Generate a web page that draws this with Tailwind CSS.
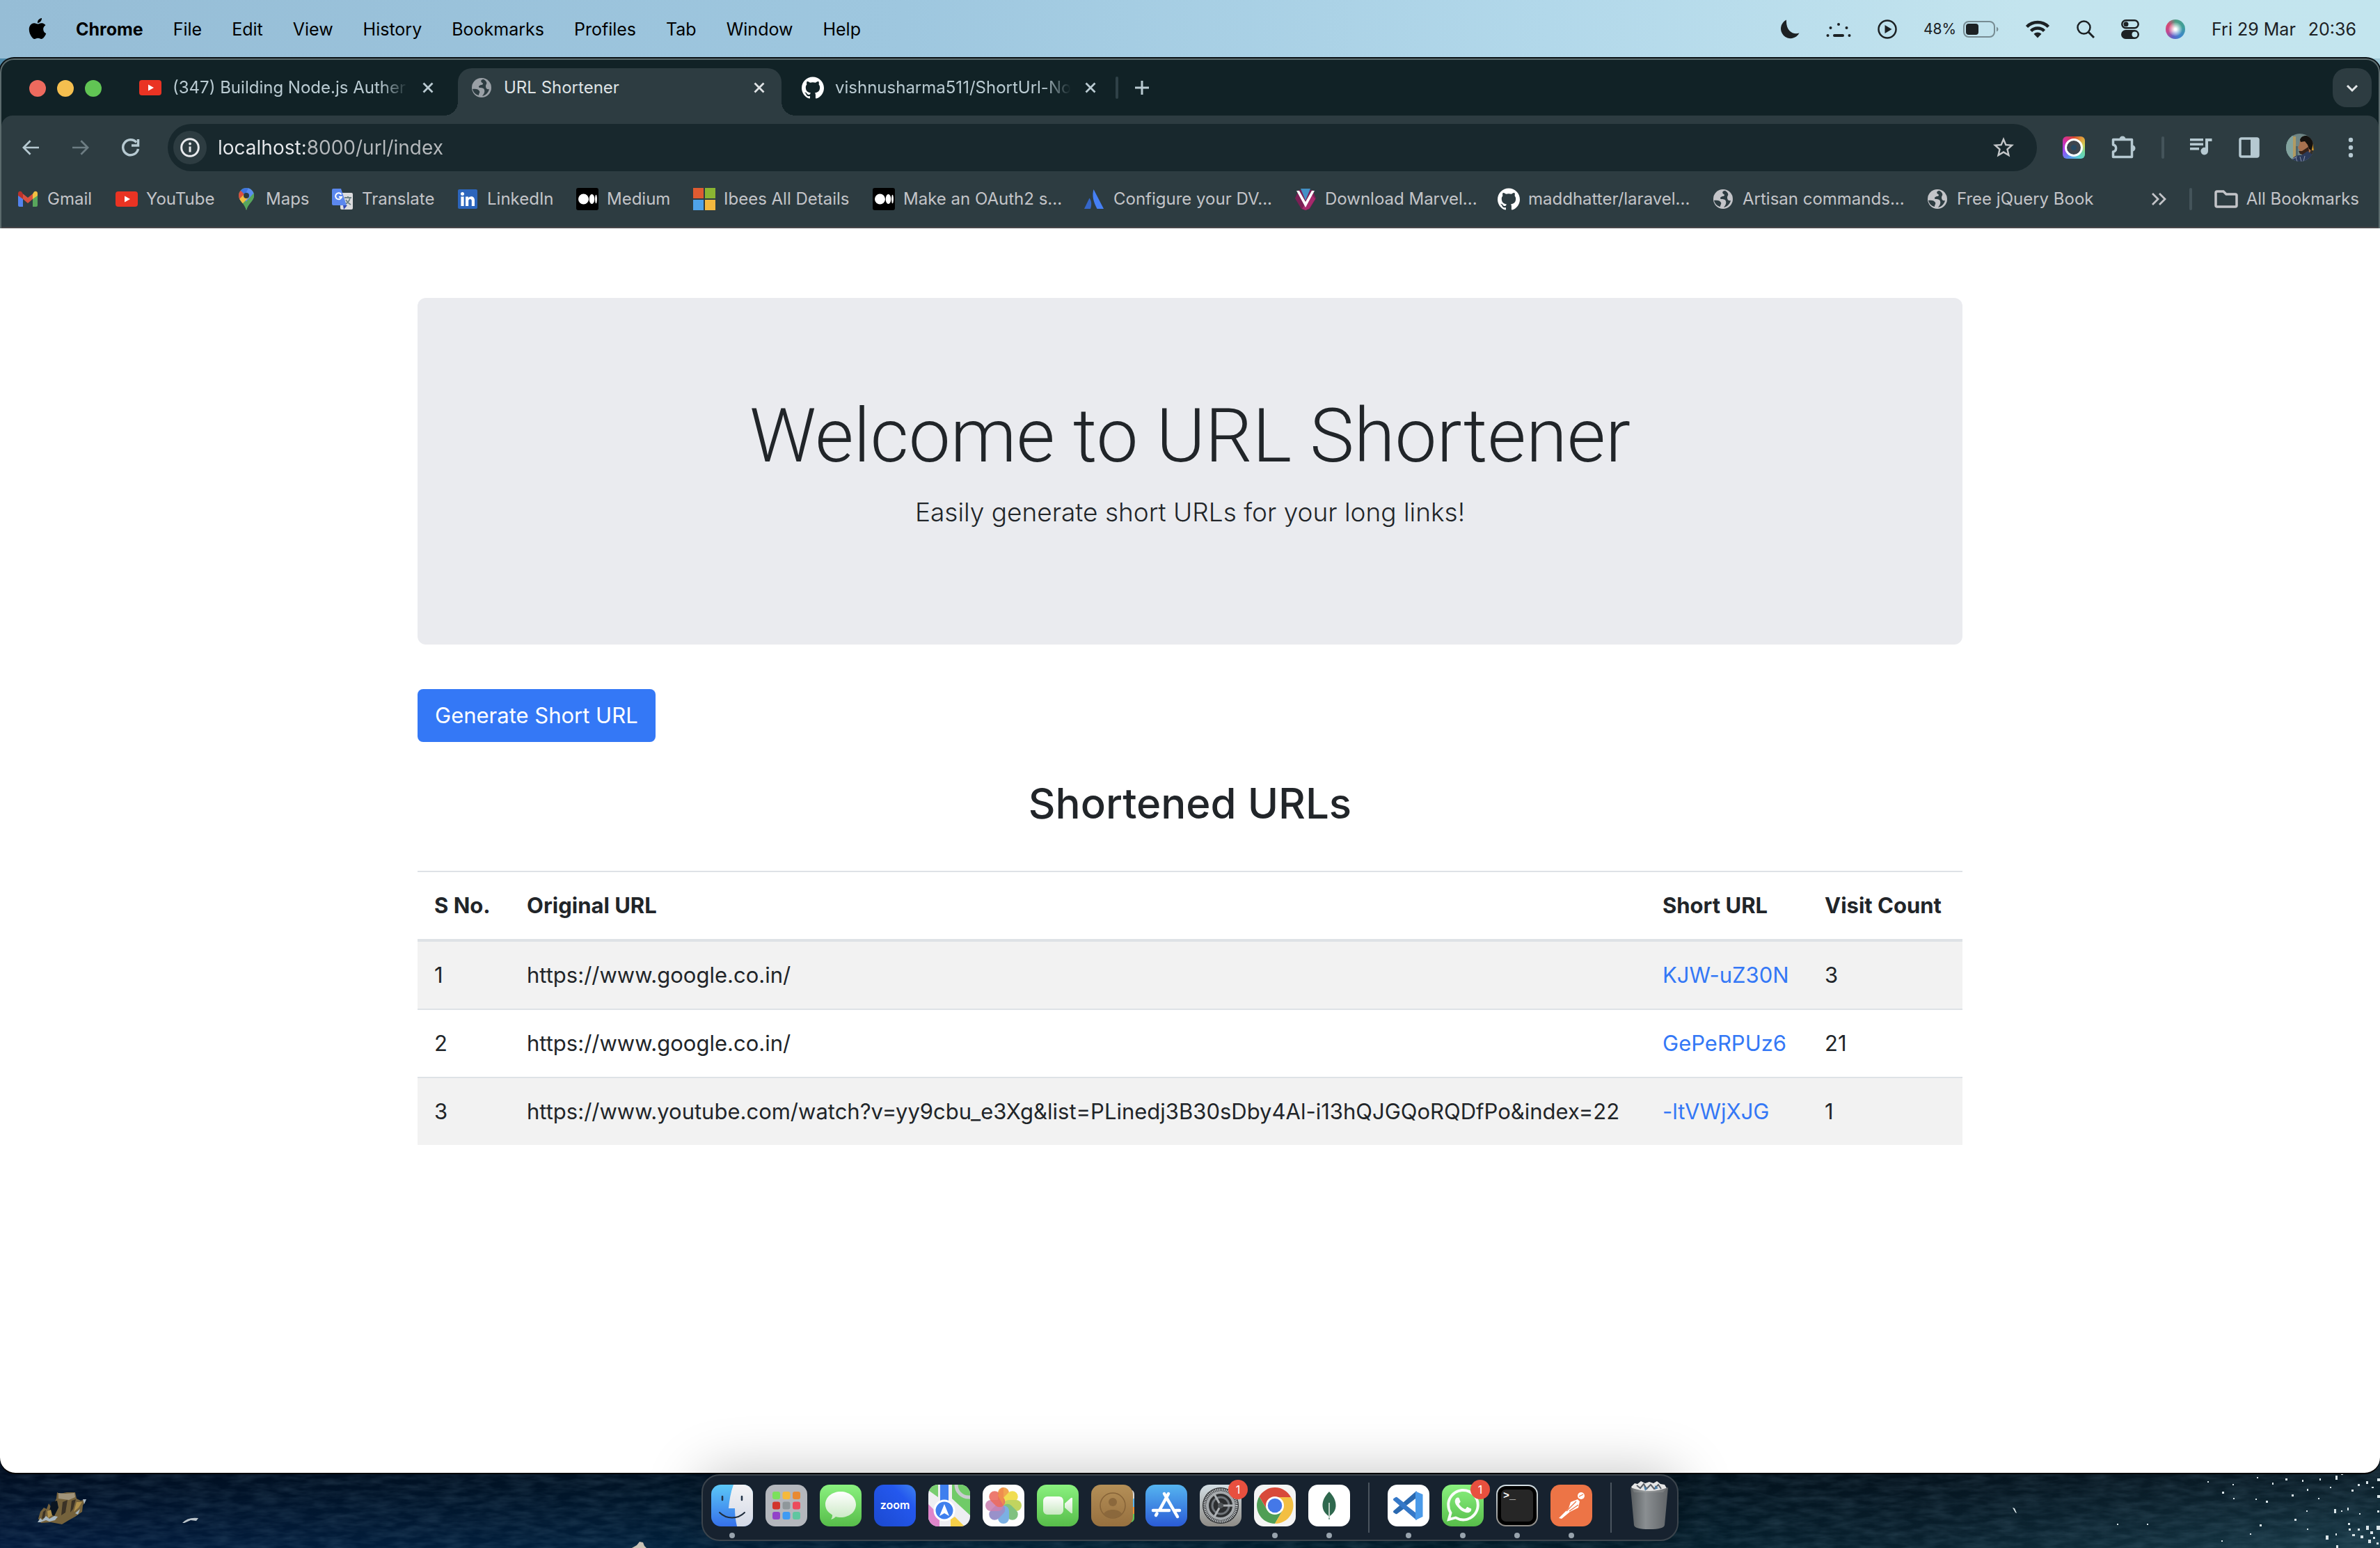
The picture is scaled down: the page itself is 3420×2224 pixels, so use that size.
<!DOCTYPE html>
<html lang="en">
<head>
<meta charset="utf-8">
<title>URL Shortener</title>
<script src="https://cdn.jsdelivr.net/npm/@tailwindcss/browser@4"></script>
</head>
<body class="flex min-h-screen flex-col bg-[#01172b] font-['Inter',sans-serif] text-[#212529]">

<!-- Shared icon symbols -->
<svg class="hidden" aria-hidden="true">
  <symbol id="youtube" viewBox="0 0 32 32"><rect x="0" y="5" width="32" height="22" rx="4" fill="#ea3323"/><path d="M13 11.500v9l8-4.500z" fill="#fff"/></symbol>
  <symbol id="github" viewBox="0 0 24 24"><path fill="#fff" d="M12 .297c-6.63 0-12 5.373-12 12 0 5.303 3.438 9.800 8.205 11.385.6.113.82-.258.82-.577 0-.285-.01-1.040-.015-2.040-3.338.724-4.042-1.610-4.042-1.610C4.422 18.070 3.633 17.700 3.633 17.700c-1.087-.744.084-.729.084-.729 1.205.084 1.838 1.236 1.838 1.236 1.070 1.835 2.809 1.305 3.495.998.108-.776.417-1.305.76-1.605-2.665-.3-5.466-1.332-5.466-5.930 0-1.310.465-2.380 1.235-3.220-.135-.303-.54-1.523.105-3.176 0 0 1.005-.322 3.300 1.230.96-.267 1.980-.399 3-.405 1.020.006 2.040.138 3 .405 2.280-1.552 3.285-1.230 3.285-1.230.645 1.653.24 2.873.12 3.176.765.84 1.230 1.910 1.230 3.220 0 4.610-2.805 5.625-5.475 5.920.42.36.81 1.096.81 2.220 0 1.606-.015 2.896-.015 3.286 0 .315.21.69.825.57C20.565 22.092 24 17.592 24 12.297c0-6.627-5.373-12-12-12"/></symbol>
  <symbol id="globe" viewBox="0 0 32 32"><circle cx="16" cy="16" r="14" fill="currentColor"/><path d="M18 4c-4 1-3 4-1 5 2 1 1 3-2 3-3 1-4 3-2 4 3 0 6 0 7 3 1 4-1 6-3 9 5-1 9-5 10-10-3 1-5-1-5-4 0-3 2-3 1-6-1-2-3-4-5-4zM3 18c4-1 9 0 10 3 1 2-1 3-1 6-5-1-8-5-9-9z" fill="#2d3c41"/></symbol>
  <symbol id="medium" viewBox="0 0 32 32"><rect width="32" height="32" rx="3" fill="#000"/><circle cx="10.500" cy="16" r="7.500" fill="#fff"/><ellipse cx="22.500" cy="16" rx="3.800" ry="7" fill="#fff"/><ellipse cx="28.500" cy="16" rx="1.400" ry="6.300" fill="#fff"/></symbol>
  <symbol id="close" viewBox="0 0 24 24"><path d="M5.500 5.500l13 13M18.500 5.500l-13 13" stroke="currentColor" stroke-width="2.800" fill="none"/></symbol>
</svg>

<!-- Menu bar -->
<header class="flex h-[84px] shrink-0 items-center justify-between bg-[linear-gradient(90deg,#96bdd6_0%,#9ec7df_38%,#b2d8ea_65%,#c3e4ee_85%,#c3e5ee_100%)] pr-[34px] pl-[38px] text-[25px] leading-8 whitespace-nowrap text-black">
  <nav class="flex items-center gap-[43px]" aria-label="Application menu">
    <svg class="-mr-1 size-8 pb-0.5" viewBox="0 0 24 24"><path d="M12.152 6.896c-.948 0-2.415-1.078-3.960-1.040-2.040.027-3.910 1.183-4.961 3.014-2.117 3.675-.546 9.103 1.519 12.090 1.013 1.454 2.208 3.090 3.792 3.039 1.520-.065 2.090-.987 3.935-.987 1.831 0 2.350.987 3.960.948 1.637-.026 2.676-1.480 3.676-2.948 1.156-1.688 1.636-3.325 1.662-3.415-.039-.013-3.182-1.221-3.220-4.857-.026-3.040 2.480-4.494 2.597-4.559-1.429-2.090-3.623-2.324-4.390-2.376-2-.156-3.675 1.090-4.610 1.090zM15.530 3.830c.843-1.012 1.400-2.427 1.245-3.830-1.207.052-2.662.805-3.532 1.818-.78.896-1.454 2.338-1.273 3.714 1.338.104 2.715-.688 3.559-1.701"/></svg>
    <a href="#" class="font-bold">Chrome</a>
    <a href="#">File</a>
    <a href="#">Edit</a>
    <a href="#">View</a>
    <a href="#">History</a>
    <a href="#">Bookmarks</a>
    <a href="#">Profiles</a>
    <a href="#">Tab</a>
    <a href="#">Window</a>
    <a href="#">Help</a>
  </nav>
  <div class="flex items-center gap-[38px] text-[#1c2124]">
    <svg class="size-7" viewBox="0 0 28 28"><path d="M9 .5A14 14 0 1 0 27.500 19.500C19 22.500 8 17 9 .5z" fill="currentColor"/></svg>
    <svg class="h-7 w-9" viewBox="0 0 36 28" fill="currentColor"><circle cx="18" cy="7" r="2"/><circle cx="6.500" cy="12" r="2"/><circle cx="29.500" cy="12" r="2"/><circle cx="2.500" cy="23" r="2"/><circle cx="33.500" cy="23" r="2"/><rect x="10" y="21" width="16" height="4" rx="2"/></svg>
    <svg class="size-7" viewBox="0 0 28 28"><circle cx="14" cy="14" r="12.500" fill="none" stroke="currentColor" stroke-width="2.500"/><path d="M10.500 8v12l10-6z" fill="currentColor"/></svg>
    <span class="flex items-center gap-2.5 text-[21px]">48%
      <svg class="h-6 w-[51px]" viewBox="0 0 51 24"><rect x="1" y="1" width="44" height="22" rx="7" fill="none" stroke="#1c2124" stroke-opacity=".45" stroke-width="2"/><rect x="4" y="4" width="18" height="16" rx="4" fill="#1c2124"/><path d="M48 8.500q2.500 1 2.500 3.500t-2.500 3.500z" fill="#1c2124" fill-opacity=".45"/></svg>
    </span>
    <svg class="h-7 w-9" viewBox="0 0 36 28"><path d="M2.500 10.500a22 22 0 0 1 31 0M8.500 16.500a13.500 13.500 0 0 1 19 0" fill="none" stroke="currentColor" stroke-width="4.500"/><path d="M18 26.500l-5.500-5.800a8 8 0 0 1 11 0z" fill="currentColor"/></svg>
    <svg class="size-[26px]" viewBox="0 0 26 26"><circle cx="10.500" cy="10.500" r="9" fill="none" stroke="currentColor" stroke-width="2.500"/><path d="M17 17l8 8" stroke="currentColor" stroke-width="3"/></svg>
    <svg class="h-7 w-[26px]" viewBox="0 0 26 28"><rect x="1.300" y="1.300" width="23.400" height="11" rx="5.500" fill="none" stroke="currentColor" stroke-width="2.500"/><circle cx="7" cy="6.800" r="3.500" fill="currentColor"/><rect y="15" width="26" height="13" rx="6.500" fill="currentColor"/><circle cx="19.500" cy="21.500" r="4" fill="#c3e5ee"/></svg>
    <span class="flex size-7 items-center justify-center rounded-full bg-[conic-gradient(from_0deg,#4e9c83,#3e9f9a_20%,#3d86cc_40%,#5d62c9_55%,#c3488e_70%,#d64a72_85%,#4e9c83)]"><span class="size-5 rounded-full bg-[radial-gradient(circle,#ffffff_10%,rgba(255,255,255,0)_75%)]"></span></span>
    <time class="flex gap-[18px]"><span>Fri 29 Mar</span><span>20:36</span></time>
  </div>
</header>

<!-- Browser window -->
<div class="flex grow flex-col bg-[linear-gradient(90deg,#4f89a8,#9ec7d4)] bg-[length:100%_60px] bg-no-repeat">
  <div class="rounded-t-[20px] border-x-2 border-t-2 border-[#5b6a6c] bg-[#112226] shadow-[0_0_0_2px_#0a1216]">
    <!-- Tab strip -->
    <div class="flex h-20 items-end pr-2.5 pl-10 text-[24px] leading-8 text-[#bacbd2]">
      <div class="mb-[27px] flex gap-4">
        <button class="size-6 rounded-full bg-[#ed6a5e]" aria-label="Close window"></button>
        <button class="size-6 rounded-full bg-[#f5bf4f]" aria-label="Minimise window"></button>
        <button class="size-6 rounded-full bg-[#61c554]" aria-label="Zoom window"></button>
      </div>
      <div class="ml-9 flex gap-[11px]" role="tablist">
        <div class="flex h-[68px] w-[465px] items-center gap-4 pr-5 pb-3 pl-[18px]" role="tab">
          <svg class="size-8 shrink-0"><use href="#youtube"/></svg>
          <span class="grow mask-r-from-88% whitespace-nowrap">(347) Building Node.js Auther</span>
          <button aria-label="Close tab"><svg class="size-6"><use href="#close"/></svg></button>
        </div>
        <div class="relative flex h-[68px] w-[465px] items-center gap-4 rounded-t-[20px] bg-[#2d3c41] pr-5 pb-3 pl-[18px] text-[#dfe3e5]" role="tab" aria-selected="true">
          <span class="absolute bottom-0 -left-5 size-5 bg-[radial-gradient(circle_at_0_0,transparent_20px,#2d3c41_20px)]"></span>
          <span class="absolute -right-5 bottom-0 size-5 bg-[radial-gradient(circle_at_100%_0,transparent_20px,#2d3c41_20px)]"></span>
          <svg class="size-8 shrink-0 text-[#9aa0a6]"><use href="#globe"/></svg>
          <span class="grow whitespace-nowrap">URL Shortener</span>
          <button aria-label="Close tab"><svg class="size-6"><use href="#close"/></svg></button>
        </div>
        <div class="flex h-[68px] w-[465px] items-center gap-4 pr-5 pb-3 pl-[18px]" role="tab">
          <svg class="size-8 shrink-0"><use href="#github"/></svg>
          <span class="grow mask-r-from-88% whitespace-nowrap">vishnusharma511/ShortUrl-No</span>
          <button aria-label="Close tab"><svg class="size-6"><use href="#close"/></svg></button>
        </div>
      </div>
      <div class="mb-3 ml-1 flex h-14 grow items-center gap-5">
        <span class="h-8 w-1 rounded-full bg-[#2f4147]"></span>
        <button aria-label="New tab"><svg class="size-7" viewBox="0 0 28 28"><path d="M14 4v20M4 14h20" stroke="currentColor" stroke-width="3"/></svg></button>
        <button class="ml-auto flex size-14 items-center justify-center rounded-[20px] bg-[#2d3c41] text-[#e3e7e9]" aria-label="Search tabs"><svg class="size-6" viewBox="0 0 24 24"><path d="M5 9l7 7 7-7" fill="none" stroke="currentColor" stroke-width="3"/></svg></button>
      </div>
    </div>

    <!-- Toolbar -->
    <div class="rounded-t-2xl border-b-2 border-[#474649] bg-[#2d3c41]">
      <div class="flex items-center gap-[37px] pt-3 pr-6 pl-[26px] text-[#b6c9d1]">
        <div class="flex gap-10">
          <button aria-label="Back"><svg class="size-8" viewBox="0 0 24 24"><path fill="currentColor" d="M21 11H6.830l5.590-5.590L11 4l-8 8 8 8 1.410-1.410L6.830 13H21v-2z"/></svg></button>
          <button aria-label="Forward" class="text-[#6d7d83]"><svg class="size-8" viewBox="0 0 24 24"><path fill="currentColor" d="M3 11h14.170l-5.590-5.590L13 4l8 8-8 8-1.410-1.410L17.170 13H3v-2z"/></svg></button>
          <button aria-label="Reload"><svg class="size-8" viewBox="0 0 32 32" fill="none" stroke="currentColor" stroke-width="3.500"><path d="M26.500 18a11 11 0 1 1-2.500-9.500"/><path d="M26.500 4v9h-9.500"/></svg></button>
        </div>
        <div class="flex h-[68px] grow items-center gap-4 rounded-full bg-[#18282d] pr-[30px] pl-2">
          <span class="flex size-12 items-center justify-center rounded-full bg-[#2d3c41] text-[#e8eaed]"><svg class="size-7" viewBox="0 0 28 28"><circle cx="14" cy="14" r="12.300" fill="none" stroke="currentColor" stroke-width="3"/><path d="M14 12.500v8" stroke="currentColor" stroke-width="3"/><circle cx="14" cy="8.500" r="1.900" fill="currentColor"/></svg></span>
          <input class="grow bg-[linear-gradient(90deg,#e8eaed_125px,#b6babd_125px)] bg-clip-text text-[28px] leading-9 text-transparent outline-none" type="text" aria-label="Address" value="localhost:8000/url/index">
          <button aria-label="Bookmark this page" class="text-[#c4c7c9]"><svg class="size-9" viewBox="0 0 24 24"><path fill="currentColor" d="M22 9.240l-7.190-.62L12 2 9.190 8.630 2 9.240l5.460 4.730L5.820 21 12 17.270 18.180 21l-1.630-7.030L22 9.240zM12 15.400l-3.760 2.270 1-4.280-3.320-2.880 4.380-.38L12 6.100l1.710 4.040 4.380.38-3.320 2.880 1 4.280L12 15.400z"/></svg></button>
        </div>
        <button aria-label="Screenshot extension" class="flex size-8 items-center justify-center rounded-md bg-[conic-gradient(from_0deg,#d9482d,#e2a03c_12%,#c9d45c_22%,#72d6a0_32%,#5cd0cf_42%,#5b8df0_58%,#a83ef0_72%,#d42fa0_86%,#d9482d)]"><span class="flex size-[26px] items-center justify-center rounded-full border-[3px] border-white bg-[#3f454e]"><span class="size-2 rounded-full bg-[#274863]"></span></span></button>
        <button aria-label="Extensions"><svg class="size-9" viewBox="-1 -1 36 36"><path d="M2.500 5.500h27v25h-27v-7.500c5.500-1 5.500-9 0-10z" fill="none" stroke="currentColor" stroke-width="3.500" stroke-linejoin="round"/><path d="M11.500 5a4.500 4.500 0 0 1 9 0zM30 13.500a4.500 4.500 0 0 1 0 9z" fill="currentColor"/></svg></button>
        <span class="h-8 w-1 rounded-full bg-[#44545a]"></span>
        <button aria-label="Media controls"><svg class="size-8" viewBox="0 0 32 32"><path fill="currentColor" d="M0 3h19v3.500H0zM0 9.500h19V13H0zM0 16h13v3.500H0zM22 3h9.500v4H26v14a5.300 5.300 0 1 1-4-5z"/></svg></button>
        <button aria-label="Side panel"><svg class="size-8" viewBox="0 0 32 32"><rect x="3" y="3" width="26" height="26" rx="2" fill="none" stroke="currentColor" stroke-width="3.500"/><path d="M18 3h11v26H18z" fill="currentColor"/></svg></button>
        <button aria-label="Profile"><svg class="size-10" viewBox="0 0 40 40"><clipPath id="av"><circle cx="20" cy="20" r="20"/></clipPath><g clip-path="url(#av)"><rect width="40" height="40" fill="#6f8585"/><path d="M0 0h10v40H0z" fill="#82a39e"/><path d="M10 4h4v30h-4z" fill="#b09a62"/><path d="M14 18h3v16h-3z" fill="#4f666e"/><path d="M34 0h6v40h-6z" fill="#33302a"/><path d="M38 14l2 10h-3z" fill="#d49a28"/><path d="M20 9l6-4 10 4v14l-4 9-8-1-4-3-1-5-2-3 2-4z" fill="#a8714f"/><path d="M20 9c2-8 14-8 18 0 1 6 0 11-2 15l-3-2-2-6-4-5-6 1z" fill="#15120f"/><path d="M18 25l5 0 9-6 1 6-6 6-7-2z" fill="#37231a"/><path d="M8 40c2-8 8-9 14-9l9-6 8 6v9z" fill="#2b3a5a"/><path d="M14 34l2 6M20 33l2 7M27 32l-2 8M10 36l6-3" stroke="#8a93a8"/></g></svg></button>
        <button aria-label="More"><svg class="size-8" viewBox="0 0 32 32" fill="currentColor"><circle cx="16" cy="5" r="3.200"/><circle cx="16" cy="16" r="3.200"/><circle cx="16" cy="27" r="3.200"/></svg></button>
      </div>

      <!-- Bookmarks bar -->
      <div class="flex h-20 items-center pr-7 pl-[22px] text-[24px] leading-8 whitespace-nowrap text-[#c3c4c8]">
        <a href="#" class="flex w-[142px] items-center gap-3"><svg class="size-8" viewBox="0 0 32 32"><path d="M2 8v17q0 2 2 2h5V13z" fill="#5383ec"/><path d="M30 8v17q0 2-2 2h-5V13z" fill="#58a65c"/><path d="M23 8.500V16l7-5V8c0-3-3-4-5-2.500z" fill="#f1bf42"/><path d="M2 8v3l7 5V8.500L7 5.500C5 4 2 5 2 8z" fill="#b9322b"/><path d="M9 8.500l7 5.500 7-5.500V16l-7 6-7-6z" fill="#d95040"/></svg>Gmail</a>
        <a href="#" class="flex w-[172px] items-center gap-3"><svg class="size-8"><use href="#youtube"/></svg>YouTube</a>
        <a href="#" class="flex w-[138px] items-center gap-3"><svg class="size-8" viewBox="0 0 32 32"><clipPath id="pin"><path d="M16 0a11 11 0 0 1 11 11c0 8-8 10-11 21-3-11-11-13-11-21A11 11 0 0 1 16 0z"/></clipPath><g clip-path="url(#pin)"><rect width="32" height="32" fill="#58a65c"/><path d="M0 0h26l-10 12-6-5z" fill="#3f74e0"/><path d="M19 0l10 6-13 14-4-5z" fill="#5b8def"/><path d="M0 3l8 1 6 6-8 9z" fill="#d95040"/><path d="M4 18l9-9 6 5L7 26z" fill="#f1bf42"/><path d="M27 7L10 26l6 7 12-18z" fill="#58a65c"/></g><circle cx="16" cy="11" r="4" fill="#2d3c41"/></svg>Maps</a>
        <a href="#" class="flex w-[180px] items-center gap-3"><svg class="size-8" viewBox="0 0 32 32"><rect x="13" y="7" width="18" height="24" rx="2" fill="#dcdcde"/><path d="M19 14h10M24 12v2M27 14c-1 5-4 8-7 9M21 17c2 4 4 5 7 7" stroke="#6f8386" stroke-width="1.800" fill="none"/><path d="M17 25h6l-5 6z" fill="#3248b4"/><path d="M3 1h11l8 24H3q-2 0-2-2V3q0-2 2-2z" fill="#5b87ee"/><path d="M14.500 9.500a4.500 4.500 0 1 0 .5 3.500h-4" stroke="#fff" stroke-width="2" fill="none"/></svg>Translate</a>
        <a href="#" class="flex w-[172px] items-center gap-3"><svg class="size-8" viewBox="0 0 32 32"><rect x="2" y="2" width="28" height="28" rx="2" fill="#2c65bc"/><g fill="#fff"><circle cx="8.500" cy="8.500" r="2.500"/><path d="M6.400 12.500h4.200V26H6.400zM13 12.500h4v2c2-3.500 9-3.500 9 3V26h-4.200v-7.500c0-3.500-4.600-3.300-4.600 0V26H13z"/></g></svg>LinkedIn</a>
        <a href="#" class="flex w-[168px] items-center gap-3"><svg class="size-8"><use href="#medium"/></svg>Medium</a>
        <a href="#" class="flex w-[258px] items-center gap-3"><svg class="size-8" viewBox="0 0 32 32"><path d="M0 0h15v15H0z" fill="#df5b31"/><path d="M17 0h15v15H17z" fill="#8bb532"/><path d="M0 17h15v15H0z" fill="#4ea2e9"/><path d="M17 17h15v15H17z" fill="#f3b83f"/></svg>Ibees All Details</a>
        <a href="#" class="flex w-[302px] items-center gap-3"><svg class="size-8"><use href="#medium"/></svg>Make an OAuth2 s...</a>
        <a href="#" class="flex w-[304px] items-center gap-3"><svg class="size-8" viewBox="0 0 32 32"><path d="M9.500 14.500c3 4 3.500 9 1.500 15.500H2z" fill="#3566c8"/><path d="M15.500 2L30 30h-9.500C15 20 13 11 15.500 2z" fill="#4680f5"/></svg>Configure your DV...</a>
        <a href="#" class="flex w-[292px] items-center gap-3"><svg class="size-8" viewBox="0 0 32 32"><path d="M6 3h20l5 12-9 15-6 2-6-2L1 15z" fill="#7b1f55"/><path d="M16 22l8-14 6 8-9 14-5 2-5-2z" fill="#a62a6c"/><path d="M9 1h14l-7 17z" fill="#4391c6"/><path d="M3 4h4l9 16 9-16h4L16 28z" fill="#fff"/></svg>Download Marvel...</a>
        <a href="#" class="flex w-[308px] items-center gap-3"><svg class="size-8"><use href="#github"/></svg>maddhatter/laravel...</a>
        <a href="#" class="flex w-[308px] items-center gap-3"><svg class="size-8"><use href="#globe"/></svg>Artisan commands...</a>
        <a href="#" class="flex items-center gap-3"><svg class="size-8"><use href="#globe"/></svg>Free jQuery Book</a>
        <div class="ml-auto flex items-center gap-8">
          <button aria-label="More bookmarks"><svg class="size-6" viewBox="0 0 24 24" fill="none" stroke="currentColor" stroke-width="2.800"><path d="M3 4l8 8-8 8M13 4l8 8-8 8"/></svg></button>
          <span class="h-8 w-1 rounded-full bg-[#44545a]"></span>
          <a href="#" class="flex items-center gap-3"><svg class="h-7 w-[34px]" viewBox="0 0 34 28"><path d="M4 3h9l4 4h13q2 0 2 2v14q0 2-2 2H4q-2 0-2-2V5q0-2 2-2z" fill="none" stroke="currentColor" stroke-width="3.500"/></svg>All Bookmarks</a>
        </div>
      </div>
    </div>
  </div>

  <!-- Page -->
  <main class="grow rounded-b-[22px] bg-white px-8 pt-[100px] pb-24 shadow-[0_2px_0_#000]">
    <div class="mx-auto max-w-[2220px] text-[31px] leading-[48px]">
      <section class="rounded-xl bg-[#eaebef] px-16 py-32 text-center">
        <h1 class="mb-2 font-['Roboto',sans-serif] text-[107px] leading-[142px] font-light">Welcome to URL Shortener</h1>
        <p class="mb-8 text-[37px] leading-[60px] font-light">Easily generate short URLs for your long links!</p>
      </section>
      <button class="mt-16 block h-[76px] rounded-lg bg-[#3478f6] px-[25px] text-white">Generate Short URL</button>
      <h2 class="mt-[50px] mb-[58px] text-center text-[60px] leading-[77px] font-medium">Shortened URLs</h2>
      <table class="w-full border-collapse text-left">
        <thead>
          <tr class="border-t-2 border-b-4 border-[#dee2e6]">
            <th scope="col" class="w-[133px] p-6 font-bold whitespace-nowrap">S No.</th>
            <th scope="col" class="p-6 font-bold">Original URL</th>
            <th scope="col" class="w-[233px] p-6 font-bold whitespace-nowrap">Short URL</th>
            <th scope="col" class="w-[222px] p-6 font-bold whitespace-nowrap">Visit Count</th>
          </tr>
        </thead>
        <tbody>
          <tr class="bg-[#f2f2f2]">
            <td class="p-6">1</td><td class="p-6">https://www.google.co.in/</td><td class="p-6"><a href="#" class="text-[#3478f6]">KJW-uZ30N</a></td><td class="p-6">3</td>
          </tr>
          <tr class="border-t-2 border-[#dee2e6]">
            <td class="p-6">2</td><td class="p-6">https://www.google.co.in/</td><td class="p-6"><a href="#" class="text-[#3478f6]">GePeRPUz6</a></td><td class="p-6">21</td>
          </tr>
          <tr class="border-t-2 border-[#dee2e6] bg-[#f2f2f2]">
            <td class="p-6">3</td><td class="p-6">https://www.youtube.com/watch?v=yy9cbu_e3Xg&amp;list=PLinedj3B30sDby4Al-i13hQJGQoRQDfPo&amp;index=22</td><td class="p-6"><a href="#" class="text-[#3478f6]">-ltVWjXJG</a></td><td class="p-6">1</td>
          </tr>
        </tbody>
      </table>
    </div>
  </main>
</div>

<!-- Wallpaper strip and dock -->
<footer class="relative flex h-[108px] shrink-0 justify-center pt-0.5">
  <div class="absolute inset-x-0 -top-6 bottom-0 -z-10 overflow-hidden bg-[linear-gradient(180deg,rgba(0,6,14,.7),rgba(0,6,14,0)),linear-gradient(90deg,#021a3c_0%,#02203c_25%,#03263c_45%,#02202f_60%,#0a2230_80%,#183a48_100%)]">
    <svg class="absolute inset-0 h-full w-full opacity-15"><filter id="sea"><feTurbulence type="fractalNoise" baseFrequency=".03 .12" numOctaves="3" seed="4"/><feColorMatrix values="0 0 0 0 .3  0 0 0 0 .5  0 0 0 0 .65  1.600 0 0 0 -.5"/></filter><rect width="100%" height="100%" filter="url(#sea)"/></svg>
    <svg class="absolute bottom-0 left-0 h-[108px] w-[1020px]" viewBox="0 0 1020 108">
      <path d="M82 28l4 2 10-2 12 0 2 9 6 3 8-2-5 9-1 9-10 7-9 5-10 6-16-3-14 1-4-6 3-10 5-6 4 2 3-8 4 6 3-4 4-9z" fill="#75623c"/>
      <path d="M84 29l10 1 13-1 1 6-9 4-15-2z" fill="#a0937a"/><path d="M74 42l8-2 2 10-6 12-8-3z" fill="#0a1420"/><path d="M90 42l7-3-3 18-6 4zM103 40l6-2-4 14-4 5zM62 56l4-3-2 12-4 1z" fill="#3b3226"/><path d="M110 42l8 0-5 8-7 6zM68 55l5-2 2 8-6 4z" fill="#b0914c"/>
      <path d="M54 71l4-6 3 3 5-6 5 4 7-4 5 1-4 5-8 2-5-2-8 3zM119 38l5 0-3 7zM108 58l7-6-3 8z" fill="#a8b7c2"/>
      <path d="M262 72q8-9 23-7l-3 4-8-1-9 4z" fill="#b9c3ca"/>
      <path d="M908 108l7-4 4-5 5 1 2 5 3 3z" fill="#c9c1b4"/>
    </svg>
    <svg class="absolute right-0 bottom-0 h-[108px] w-[560px]" viewBox="0 0 560 108" fill="#dbe6ea"><path d="M32 50l3 1 3 7-2-1zM182 73h2v2h-2zM312 12h2v2h-2zM333 27h3v3h-3zM348 16h2v2h-2zM383 6h2v2h-2zM405 14h2v3h-2zM424 8h3v3h-3zM433 31h3v3h-3zM448 10h2v3h-2zM455 23h2v3h-2zM473 8h2v3h-2zM488 20h2v2h-2zM496 4h3v6h-3zM504 0h3v3h-3zM519 24h3v3h-3zM528 16h3v3h-3zM540 12h3v4h-3zM548 20h3v2h-3zM556 8h4v4h-4zM556 32h4v4h-4zM396 40h3v3h-3zM381 37h2v2h-2zM349 36h2v2h-2zM471 36h2v2h-2zM454 54h2v2h-2zM494 52h3v6h-3zM504 54h2v2h-2zM513 50h2v4h-2zM530 58h2v2h-2zM556 54h3v3h-3zM437 66h3v3h-3zM387 74h3v3h-3zM225 73h2v2h-2zM455 80h2v2h-2zM514 72h3v3h-3zM515 80h3v3h-3zM528 80h3v3h-3zM540 76h4v6h-4zM546 84h4v4h-4zM555 76h5v6h-5zM373 87h2v2h-2zM482 90h4v6h-4zM496 87h2v3h-2zM520 88h4v3h-4zM532 90h4v4h-4zM543 96h4v5h-4zM550 92h3v3h-3zM332 97h2v2h-2zM497 104h3v4h-3zM555 100h3v3h-3z"/></svg>
  </div>

  <nav class="relative flex h-24 items-start gap-[18px] rounded-[26px] border-2 border-[#3b444c] bg-[#17222f] px-3 pt-[13px] shadow-[0_0_80px_rgba(0,0,0,.25)]" aria-label="Dock">
    <svg class="absolute h-0 w-0" aria-hidden="true"><defs>
      <linearGradient id="gFind" x2="0" y2="1"><stop stop-color="#5cc8f7"/><stop offset="1" stop-color="#3570ea"/></linearGradient>
      <linearGradient id="gFace" x2="0" y2="1"><stop stop-color="#f3f3f5"/><stop offset="1" stop-color="#d3d9e6"/></linearGradient>
      <linearGradient id="gGreen" x2="0" y2="1"><stop stop-color="#8af17f"/><stop offset="1" stop-color="#57bd4a"/></linearGradient>
      <linearGradient id="gWhite" x2="0" y2="1"><stop stop-color="#fff"/><stop offset="1" stop-color="#c9e8c2"/></linearGradient>
      <linearGradient id="gZoom" x1="1" x2="0" y2="1"><stop stop-color="#3f83f0"/><stop offset=".3" stop-color="#2458ee"/><stop offset="1" stop-color="#1b49cf"/></linearGradient>
      <linearGradient id="gStore" x2="0" y2="1"><stop stop-color="#55b5f0"/><stop offset="1" stop-color="#2a5bd6"/></linearGradient>
      <linearGradient id="gGear" x2="0" y2="1"><stop stop-color="#d3dee4"/><stop offset="1" stop-color="#8e8b86"/></linearGradient>
      <linearGradient id="gTrash"><stop stop-color="#5d6163"/><stop offset=".4" stop-color="#94989a"/><stop offset="1" stop-color="#66696c"/></linearGradient>
      <linearGradient id="gTan" x2="0" y2="1"><stop stop-color="#b48f57"/><stop offset="1" stop-color="#97703f"/></linearGradient>
      <clipPath id="sq"><rect width="60" height="60" rx="14"/></clipPath>
    </defs></svg>

    <a href="#" aria-label="Finder" class="flex flex-col items-center gap-[9px]"><svg class="size-[60px]" viewBox="0 0 60 60"><g clip-path="url(#sq)"><rect width="60" height="60" fill="url(#gFind)"/><path d="M32 0c-4 11-6 22-7 34h9c0 9 1 18 3 26h23V0z" fill="url(#gFace)"/></g><path d="M16 17v5M44 17v5" stroke="#24364a" stroke-width="2.600" stroke-linecap="round"/><path d="M12 40c10 10 26 10 36 0" fill="none" stroke="#1f2d3c" stroke-width="2" stroke-linecap="round"/></svg><span class="size-2 rounded-full bg-[#98a3ad]"></span></a>
    <a href="#" aria-label="Launchpad"><svg class="size-[60px]" viewBox="0 0 60 60"><rect width="60" height="60" rx="14" fill="#b4b7bd"/><g><rect x="10" y="10" width="11" height="11" rx="3" fill="#7be05c"/><rect x="24.500" y="10" width="11" height="11" rx="3" fill="#f6b93c"/><rect x="39" y="10" width="11" height="11" rx="3" fill="#e88a32"/><rect x="10" y="24.500" width="11" height="11" rx="3" fill="#d2352b"/><rect x="24.500" y="24.500" width="11" height="11" rx="3" fill="#8f979b"/><rect x="39" y="24.500" width="11" height="11" rx="3" fill="#ec4b5c"/><rect x="10" y="39" width="11" height="11" rx="3" fill="#9243c9"/><rect x="24.500" y="39" width="11" height="11" rx="3" fill="#3f9bf3"/><rect x="39" y="39" width="11" height="11" rx="3" fill="#5fc6a0"/></g></svg></a>
    <a href="#" aria-label="Messages"><svg class="size-[60px]" viewBox="0 0 60 60"><rect width="60" height="60" rx="14" fill="url(#gGreen)"/><path d="M30 10c12.500 0 22 8 22 18.500S42.500 47 30 47c-2.500 0-5-.3-7-1-2 2-4 3.200-7 4 1.500-2 2.200-4 2-6.500C12 40 8 35 8 28.500 8 18 17.500 10 30 10z" fill="url(#gWhite)"/></svg></a>
    <a href="#" aria-label="Zoom"><svg class="size-[60px]" viewBox="0 0 60 60"><rect width="60" height="60" rx="14" fill="url(#gZoom)"/><text x="30" y="35" text-anchor="middle" font-family="Inter, sans-serif" font-weight="600" font-size="16" fill="#fff">zoom</text></svg></a>
    <a href="#" aria-label="Maps"><svg class="size-[60px]" viewBox="0 0 60 60"><g clip-path="url(#sq)"><rect width="60" height="60" fill="#eeeef2"/><path d="M0 0h14v18L0 8z" fill="#79ce70"/><path d="M34 0h26v44L34 20z" fill="#70cb68"/><circle cx="58" cy="0" r="18" fill="none" stroke="#c9ccd0" stroke-width="5"/><path d="M0 28l16 16v16H0z" fill="#df85cb"/><path d="M32 50l6-4 14 14H32z" fill="#f6cf48"/><path d="M17 0h12v40H17z" fill="#3f7fee"/></g><circle cx="23" cy="37" r="14" fill="#3f7fee" stroke="#fff" stroke-width="3"/><path d="M23 28l7 17-7-4-7 4z" fill="#fff"/></svg></a>
    <a href="#" aria-label="Photos"><svg class="size-[60px]" viewBox="0 0 60 60"><rect width="60" height="60" rx="14" fill="#fdfdfd"/><g opacity=".88"><rect x="22" y="4" width="16" height="26" rx="8" fill="#f09a37"/><rect x="22" y="4" width="16" height="26" rx="8" fill="#efd93b" transform="rotate(45 30 30)"/><rect x="22" y="4" width="16" height="26" rx="8" fill="#b9cf4a" transform="rotate(90 30 30)"/><rect x="22" y="4" width="16" height="26" rx="8" fill="#6fb96e" transform="rotate(135 30 30)"/><rect x="22" y="4" width="16" height="26" rx="8" fill="#6aa6e0" transform="rotate(180 30 30)"/><rect x="22" y="4" width="16" height="26" rx="8" fill="#8c83c4" transform="rotate(225 30 30)"/><rect x="22" y="4" width="16" height="26" rx="8" fill="#c272a8" fill-opacity=".9" transform="rotate(270 30 30)"/><rect x="22" y="4" width="16" height="26" rx="8" fill="#e8594a" fill-opacity=".9" transform="rotate(315 30 30)"/><path d="M30 30l-8-14q2-12 8-12v26z" fill="#ee7f37"/></g></svg></a>
    <a href="#" aria-label="FaceTime"><svg class="size-[60px]" viewBox="0 0 60 60"><rect width="60" height="60" rx="14" fill="url(#gGreen)"/><rect x="9" y="17" width="29" height="26" rx="6" fill="url(#gWhite)"/><path d="M40 27l9-8q2-1 2 1v20q0 2-2 1l-9-8z" fill="url(#gWhite)"/></svg></a>
    <a href="#" aria-label="Contacts"><svg class="size-[60px] overflow-visible" viewBox="0 0 60 60"><path d="M56 8h3q3 2 3 6v6h-6z" fill="#d8d8d8"/><path d="M56 20h6v12h-6z" fill="#5ab6ee"/><path d="M56 32h6v10h-6z" fill="#ee8f33"/><path d="M56 42h6v6q0 4-4 6h-2z" fill="#62c554"/><rect width="60" height="60" rx="14" fill="url(#gTan)"/><circle cx="31" cy="30" r="18" fill="none" stroke="#866338" stroke-width="1.500"/><circle cx="31" cy="25" r="6" fill="#8b683c"/><path d="M18 42c4-8 22-8 26 0-6 8-20 8-26 0z" fill="#8b683c"/></svg></a>
    <a href="#" aria-label="App Store"><svg class="size-[60px]" viewBox="0 0 60 60"><rect width="60" height="60" rx="14" fill="url(#gStore)"/><path d="M33 13L20 37M15 44l1.500-2.500M27 13l19 33M11 37h23M43 37h6" stroke="#fff" stroke-width="4.500" stroke-linecap="round"/></svg></a>
    <a href="#" aria-label="System Settings" class="relative"><svg class="size-[60px]" viewBox="0 0 60 60"><rect width="60" height="60" rx="14" fill="url(#gGear)"/><circle cx="30" cy="30" r="26" fill="#2c2e30"/><circle cx="30" cy="30" r="23" fill="none" stroke="#b9bdc0" stroke-width="3.500" stroke-dasharray="1.500 1"/><circle cx="30" cy="30" r="19" fill="none" stroke="#a5a9ac" stroke-width="4"/><circle cx="30" cy="30" r="12" fill="none" stroke="#70757a" stroke-width="3"/><path d="M30 30h19M30 30l-9.500-17M30 30l-9.500 17" stroke="#aeb2b5" stroke-width="3"/><circle cx="30" cy="30" r="4" fill="#515558"/></svg><span class="absolute -top-[7px] -right-[9px] flex size-7 items-center justify-center rounded-full bg-[#e8503f] text-[16px] leading-5 text-white">1</span></a>
    <a href="#" aria-label="Chrome" class="flex flex-col items-center gap-[9px]"><svg class="size-[60px]" viewBox="0 0 60 60"><rect width="60" height="60" rx="14" fill="#f4f4f4"/><path d="M30 56A26 26 0 0 1 7.500 17L19.500 37l21 1z" fill="#4f9e55"/><path d="M30 56l11.500-20L30 18h23.500A26 26 0 0 1 30 56z" fill="#f3bf42"/><path d="M7.500 17A26 26 0 0 1 53 18H30L19 36z" fill="#d8493a"/><circle cx="30" cy="30" r="13" fill="#fff"/><circle cx="30" cy="30" r="10.300" fill="#4478e8"/></svg><span class="size-2 rounded-full bg-[#98a3ad]"></span></a>
    <a href="#" aria-label="MongoDB Compass" class="flex flex-col items-center gap-[9px]"><svg class="size-[60px]" viewBox="0 0 60 60"><rect width="60" height="60" rx="14" fill="#fff"/><path d="M30 10c6 6 10 13 9.500 21C39 38 35 42 31 45l-.5 5h-1L29 45c-4-3-8-7-8.500-14C20 23 24 16 30 10z" fill="#2f684e"/><path d="M30 26v22" stroke="#e8efe9" stroke-width="1.500"/></svg><span class="size-2 rounded-full bg-[#98a3ad]"></span></a>
    <span class="mx-2 -mt-[3px] h-[72px] w-0.5 bg-[#4a545e]"></span>
    <a href="#" aria-label="Visual Studio Code" class="flex flex-col items-center gap-[9px]"><svg class="size-[60px]" viewBox="0 0 60 60"><rect width="60" height="60" rx="14" fill="#fff"/><path d="M8.500 37.500q-1 1.500 0 2.500l3 2q1 .5 2 0L41.500 21V9z" fill="#2a69b0"/><path d="M8.500 22.500q-1-1.500 0-2.500l3-2q1-.5 2 0L41.500 40v11z" fill="#3578c8"/><path d="M40 9.500L50.500 14v32L40 51z" fill="#4a9ae9"/><path d="M40 20v20L27 30z" fill="#fff"/></svg><span class="size-2 rounded-full bg-[#98a3ad]"></span></a>
    <a href="#" aria-label="WhatsApp" class="relative flex flex-col items-center gap-[9px]"><svg class="size-[60px]" viewBox="0 0 60 60"><rect width="60" height="60" rx="14" fill="url(#gGreen)"/><g transform="translate(7 6) scale(1.950)"><path fill="#fafcf9" d="M17.472 14.382c-.297-.149-1.758-.867-2.030-.967-.273-.099-.471-.148-.67.15-.197.297-.767.966-.94 1.164-.173.199-.347.223-.644.075-.297-.15-1.255-.463-2.390-1.475-.883-.788-1.480-1.761-1.653-2.059-.173-.297-.018-.458.13-.606.134-.133.298-.347.446-.52.149-.174.198-.298.298-.497.099-.198.05-.371-.025-.52-.075-.149-.669-1.612-.916-2.207-.242-.579-.487-.5-.669-.51-.173-.008-.371-.01-.57-.01-.198 0-.52.074-.792.372-.272.297-1.040 1.016-1.040 2.479 0 1.462 1.065 2.875 1.213 3.074.149.198 2.096 3.200 5.077 4.487.709.306 1.262.489 1.694.625.712.227 1.360.195 1.871.118.571-.085 1.758-.719 2.006-1.413.248-.694.248-1.289.173-1.413-.074-.124-.272-.198-.57-.347m-5.421 7.403h-.004a9.870 9.870 0 01-5.031-1.378l-.361-.214-3.741.982.998-3.648-.235-.374a9.860 9.860 0 01-1.510-5.260c.001-5.450 4.436-9.884 9.888-9.884 2.640 0 5.122 1.030 6.988 2.898a9.825 9.825 0 012.893 6.994c-.003 5.450-4.437 9.884-9.885 9.884m8.413-18.297A11.815 11.815 0 0012.050 0C5.495 0 .16 5.335.157 11.892c0 2.096.547 4.142 1.588 5.945L.057 24l6.305-1.654a11.882 11.882 0 005.683 1.448h.005c6.554 0 11.890-5.335 11.893-11.893a11.821 11.821 0 00-3.480-8.413z"/></g></svg><span class="absolute -top-[7px] -right-[9px] flex size-7 items-center justify-center rounded-full bg-[#e8503f] text-[16px] leading-5 text-white">1</span><span class="size-2 rounded-full bg-[#98a3ad]"></span></a>
    <a href="#" aria-label="Terminal" class="flex flex-col items-center gap-[9px]"><svg class="size-[60px]" viewBox="0 0 60 60"><rect width="60" height="60" rx="14" fill="url(#gGear)"/><rect x="2" y="2" width="56" height="56" rx="12" fill="#000"/><rect x="7" y="7" width="46" height="46" rx="7" fill="#262626"/><text x="10" y="20" font-family="Liberation Mono, monospace" font-weight="700" font-size="15" fill="#fff">&gt;_</text></svg><span class="size-2 rounded-full bg-[#98a3ad]"></span></a>
    <a href="#" aria-label="Postman" class="flex flex-col items-center gap-[9px]"><svg class="size-[60px]" viewBox="0 0 60 60"><rect width="60" height="60" rx="14" fill="#ed7446"/><circle cx="44" cy="16" r="5" fill="#fff"/><path d="M39 21l3 3-2 9-12 6-12 10-4-1 14-14 3-9z" fill="#fff"/><path d="M37 24L23 38M40 29l-13 9M41 17l6-3" stroke="#ed7446" stroke-width="1.300"/></svg><span class="size-2 rounded-full bg-[#98a3ad]"></span></a>
    <span class="mx-2 -mt-[3px] h-[72px] w-0.5 bg-[#4a545e]"></span>
    <a href="#" aria-label="Trash" class="-mt-1.5"><svg class="h-[72px] w-[56px]" viewBox="0 0 56 72"><path d="M2 9l5-5 4 1 5-4 6 3 6-2 6 2 5-3 5 4 6 1 3 5-5 6H6z" fill="#e6e6e6"/><path d="M10 7l5 4 5-6 4 7 6-6 5 6 6-6 4 6" stroke="#5a5f66" stroke-width="2" fill="none"/><path d="M20 8l5 3-3 4zM36 7l5 4-5 2z" fill="#4a7ea8"/><path d="M1 10q27 10 54 0l-5 54q-1 6-22 6T6 64z" fill="url(#gTrash)" fill-opacity=".92"/></svg></a>
  </nav>
</footer>
</body>
</html>
